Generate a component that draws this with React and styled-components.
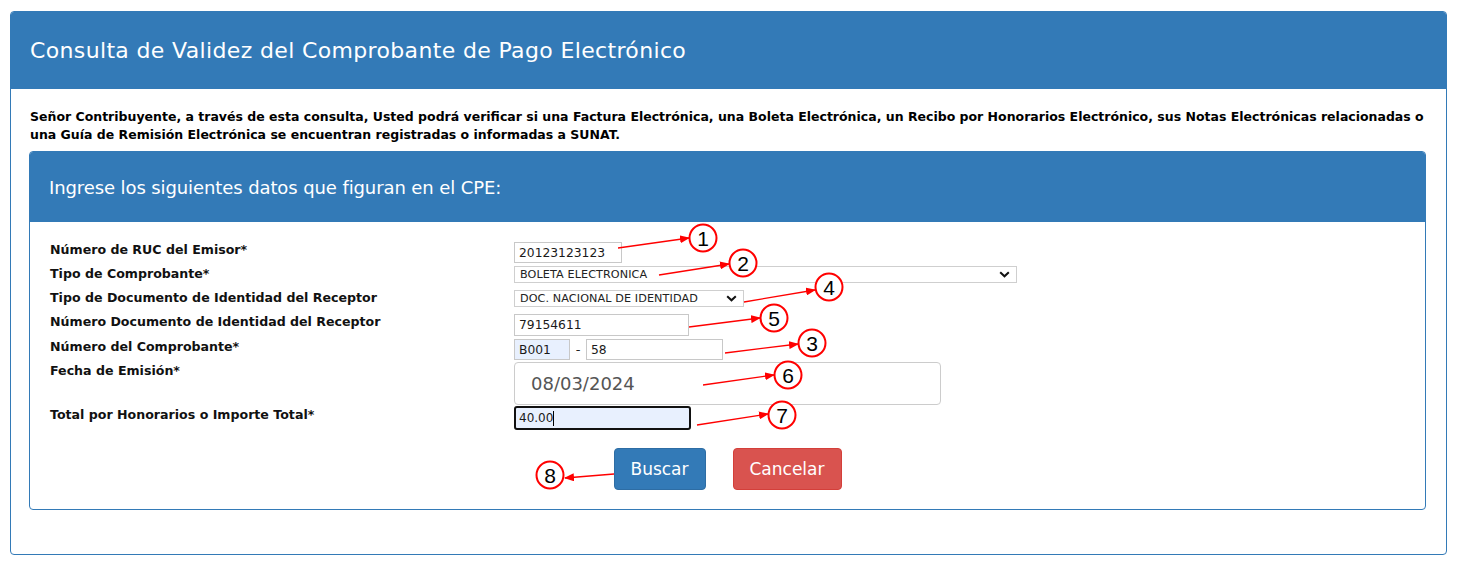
import React from "react";
import styled, { createGlobalStyle } from "styled-components";

const Global = createGlobalStyle`
  html, body { margin: 0; padding: 0; background: #fff; }
  body { font-family: "DejaVu Sans", Verdana, sans-serif; color: #000; }
`;

const Page = styled.div`
  position: relative;
  width: 1457px;
  height: 565px;
  box-sizing: border-box;
  padding: 11px 10px 0 10px;
`;

const Panel = styled.section`
  border: 1px solid #337ab7;
  border-radius: 4px;
  overflow: hidden;
`;

const PanelHeader = styled.header`
  background: #337ab7;
  height: ${(p) => p.$h}px;
  display: flex;
  align-items: center;
  padding-left: 19px;
  color: #fff;
  font-size: ${(p) => p.$fs}px;
  letter-spacing: ${(p) => p.$ls || 0}px;
`;

const OuterBody = styled.div`
  padding: 19px 20px 44px 18px;
`;

const Intro = styled.p`
  margin: 0 0 7px 1px;
  font-size: 12.5px;
  font-weight: bold;
  line-height: 18px;
  white-space: nowrap;
`;

const InnerBody = styled.div`
  padding: 19px 20px 19px 20px;
`;

const Row = styled.div`
  display: grid;
  grid-template-columns: 464px 1fr;
  height: ${(p) => p.$h}px;
  align-items: start;
`;

const Label = styled.label`
  font-size: 12.6px;
  font-weight: bold;
  line-height: 18px;
  color: #111;
`;

const Controls = styled.div`
  display: flex;
  align-items: center;
  gap: 5px;
  padding-top: ${(p) => p.$pt || 0}px;
`;

const TextBox = styled.div`
  box-sizing: border-box;
  width: ${(p) => p.$w}px;
  height: ${(p) => p.$h}px;
  border: 1px solid #c8c8c8;
  background: ${(p) => (p.$fill ? "#e8f0fe" : "#fff")};
  font-size: 12.3px;
  color: #1a1a1a;
  padding-left: 4px;
  display: flex;
  align-items: center;
`;

const FocusBox = styled(TextBox)`
  border: 2px solid #111;
  border-radius: 3px;
  padding-left: 3px;
  font-size: 12px;
`;

const Caret = styled.span`
  display: inline-block;
  width: 1px;
  height: 15px;
  background: #000;
`;

const SelectBox = styled.div`
  box-sizing: border-box;
  width: ${(p) => p.$w}px;
  height: 17px;
  border: 1px solid #cfcfcf;
  background: #fff;
  display: flex;
  align-items: center;
  justify-content: space-between;
  padding: 0 6px 0 5px;
  font-size: 11.2px;
  color: #222;
  letter-spacing: 0.1px;
`;

const Dash = styled.span`
  width: 6px;
  text-align: center;
  font-size: 13px;
  color: #222;
`;

const DateBox = styled.div`
  box-sizing: border-box;
  width: 427px;
  height: 43px;
  border: 1px solid #ccc;
  border-radius: 4px;
  display: flex;
  align-items: center;
  padding-left: 16px;
  font-size: 18px;
  color: #555;
`;

const Actions = styled.div`
  display: flex;
  justify-content: center;
  gap: 27px;
  margin-top: 17px;
`;

const Button = styled.button`
  box-sizing: border-box;
  height: 42px;
  width: ${(p) => p.$w}px;
  border-radius: 4px;
  border: 1px solid ${(p) => (p.$danger ? "#d43f3a" : "#2e6da4")};
  background: ${(p) => (p.$danger ? "#d9534f" : "#337ab7")};
  color: #fff;
  font-family: "DejaVu Sans", Verdana, sans-serif;
  font-size: 17px;
  padding: 0;
`;

const Overlay = styled.svg`
  position: absolute;
  left: 0;
  top: 0;
  pointer-events: none;
`;

const Chevron = () => (
  <svg width="11" height="7" viewBox="0 0 11 7">
    <path d="M1.2 1.2 L5.5 5.3 L9.8 1.2" fill="none" stroke="#111" strokeWidth="2" />
  </svg>
);

const marks = [
  { n: 1, c: [703, 238], a: [618, 248, 689, 238] },
  { n: 2, c: [743, 263], a: [659, 275, 729, 264] },
  { n: 4, c: [829, 287], a: [744, 302, 815, 290] },
  { n: 5, c: [774, 318], a: [689, 327, 760, 318] },
  { n: 3, c: [812, 343], a: [725, 353, 798, 344] },
  { n: 6, c: [788, 375], a: [703, 385, 774, 375] },
  { n: 7, c: [782, 415], a: [697, 425, 768, 414] },
  { n: 8, c: [550, 475], a: [614, 474, 565, 478] },
];

const Annotations = () => (
  <Overlay width="1457" height="565" viewBox="0 0 1457 565">
    <defs>
      <marker id="ah" markerWidth="10" markerHeight="8" refX="9" refY="4" orient="auto" markerUnits="userSpaceOnUse">
        <path d="M0 0 L10 4 L0 8 Z" fill="#ff0000" />
      </marker>
    </defs>
    {marks.map((m) => (
      <g key={m.n}>
        <line x1={m.a[0]} y1={m.a[1]} x2={m.a[2]} y2={m.a[3]} stroke="#ff0000" strokeWidth="1.3" markerEnd="url(#ah)" />
        <circle cx={m.c[0]} cy={m.c[1]} r="13.5" fill="#fff" stroke="#ff0000" strokeWidth="2" />
        <text x={m.c[0]} y={m.c[1] + 7.5} textAnchor="middle" fontFamily="Liberation Sans, Arial, sans-serif" fontSize="21" fill="#000">
          {m.n}
        </text>
      </g>
    ))}
  </Overlay>
);

export default function App() {
  return (
    <>
      <Global />
      <Page>
        <Panel>
          <PanelHeader $h={77} $fs={22} $ls={0.35}>
            Consulta de Validez del Comprobante de Pago Electrónico
          </PanelHeader>
          <OuterBody>
            <Intro>
              Señor Contribuyente, a través de esta consulta, Usted podrá verificar si una Factura Electrónica, una Boleta
              Electrónica, un Recibo por Honorarios Electrónico, sus Notas Electrónicas relacionadas o
              <br />
              una Guía de Remisión Electrónica se encuentran registradas o informadas a SUNAT.
            </Intro>
            <Panel>
              <PanelHeader $h={70} $fs={18} $ls={-0.1}>
                Ingrese los siguientes datos que figuran en el CPE:
              </PanelHeader>
              <InnerBody>
                <Row $h={24}>
                  <Label>Número de RUC del Emisor*</Label>
                  <Controls $pt={1}>
                    <TextBox $w={108} $h={21}>20123123123</TextBox>
                  </Controls>
                </Row>
                <Row $h={24}>
                  <Label>Tipo de Comprobante*</Label>
                  <Controls $pt={1}>
                    <SelectBox $w={503}>
                      <span>BOLETA ELECTRONICA</span>
                      <Chevron />
                    </SelectBox>
                  </Controls>
                </Row>
                <Row $h={24}>
                  <Label>Tipo de Documento de Identidad del Receptor</Label>
                  <Controls $pt={1}>
                    <SelectBox $w={230}>
                      <span>DOC. NACIONAL DE IDENTIDAD</span>
                      <Chevron />
                    </SelectBox>
                  </Controls>
                </Row>
                <Row $h={25}>
                  <Label>Número Documento de Identidad del Receptor</Label>
                  <Controls $pt={1}>
                    <TextBox $w={175} $h={22}>79154611</TextBox>
                  </Controls>
                </Row>
                <Row $h={24}>
                  <Label>Número del Comprobante*</Label>
                  <Controls $pt={1}>
                    <TextBox $w={56} $h={21} $fill>B001</TextBox>
                    <Dash>-</Dash>
                    <TextBox $w={137} $h={21}>58</TextBox>
                  </Controls>
                </Row>
                <Row $h={44}>
                  <Label>Fecha de Emisión*</Label>
                  <Controls>
                    <DateBox>08/03/2024</DateBox>
                  </Controls>
                </Row>
                <Row $h={25}>
                  <Label>Total por Honorarios o Importe Total*</Label>
                  <Controls>
                    <FocusBox $w={177} $h={24} $fill>
                      40.00
                      <Caret />
                    </FocusBox>
                  </Controls>
                </Row>
                <Actions>
                  <Button $w={92}>Buscar</Button>
                  <Button $w={109} $danger>
                    Cancelar
                  </Button>
                </Actions>
              </InnerBody>
            </Panel>
          </OuterBody>
        </Panel>
        <Annotations />
      </Page>
    </>
  );
}
